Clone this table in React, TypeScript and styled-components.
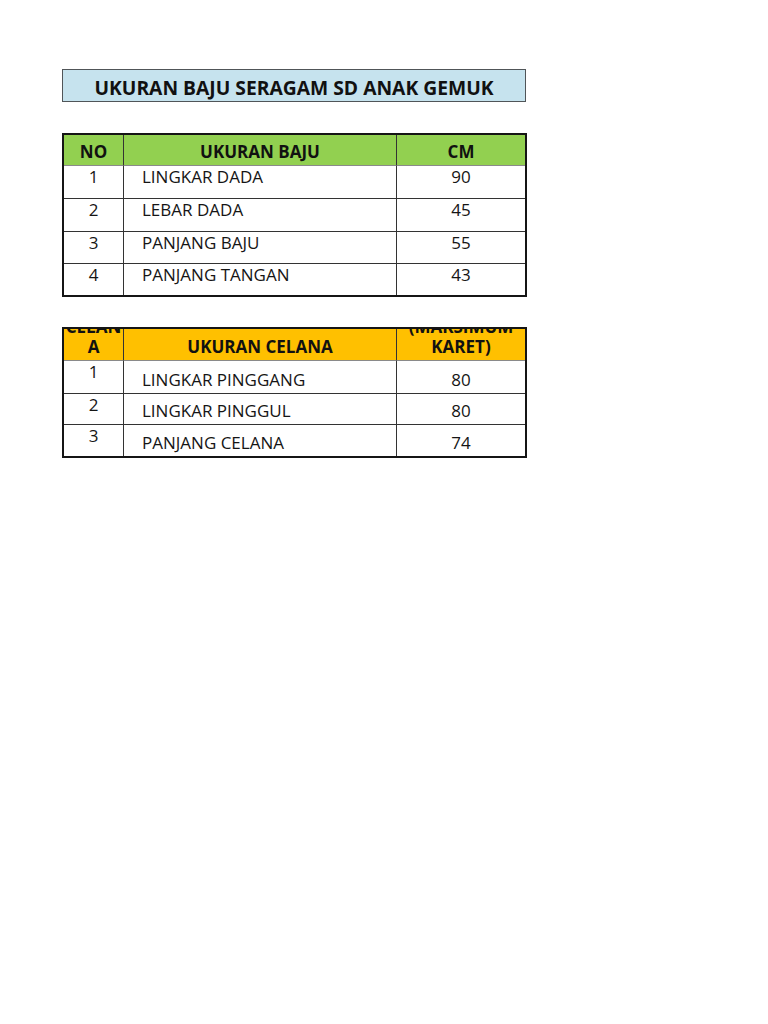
import React from "react";
import styled, { createGlobalStyle } from "styled-components";

const Global = createGlobalStyle`
  html, body { margin: 0; padding: 0; background: #ffffff; }
  body { font-family: "Open Sans", "Noto Sans", sans-serif; color: #111; }
`;

const Page = styled.div`
  width: 768px;
  height: 1024px;
  box-sizing: border-box;
  padding: 69px 0 0 62px;
  display: flex;
  flex-direction: column;
`;

const Title = styled.div`
  width: 464px;
  height: 33px;
  box-sizing: border-box;
  background: #c6e3ee;
  border: 1.5px solid #505558;
  display: flex;
  align-items: center;
  justify-content: center;
  padding-top: 3px;
  font-weight: 700;
  font-size: 19.3px;
  color: #111;
`;

const Table = styled.div<{ $mt: number }>`
  margin-top: ${(p) => p.$mt}px;
  width: 465px;
  box-sizing: border-box;
  border: 2px solid #151515;
  display: grid;
  grid-template-columns: 60px 273px 1fr;
`;

const HeadCell = styled.div<{ $bg: string; $h: number; $last?: boolean }>`
  height: ${(p) => p.$h}px;
  background: ${(p) => p.$bg};
  box-sizing: border-box;
  border-right: ${(p) => (p.$last ? "none" : "1px solid #333")};
  border-bottom: 1px solid #8a8a8a;
  overflow: hidden;
  display: flex;
  flex-direction: column;
  justify-content: flex-end;
  align-items: center;
  text-align: center;
  padding: 0 1px 3px;
  font-weight: 700;
  font-size: 17px;
  line-height: 20px;
  color: #111;
  overflow-wrap: anywhere;
`;

const HeadText = styled.span`
  display: block;
  width: 100%;
`;

type Align = "top" | "bottom";

const Cell = styled.div<{ $h: number; $align: Align; $left?: boolean; $last?: boolean; $lastRow?: boolean }>`
  height: ${(p) => p.$h}px;
  box-sizing: border-box;
  border-right: ${(p) => (p.$last ? "none" : "1px solid #333")};
  border-bottom: ${(p) => (p.$lastRow ? "none" : "1px solid #333")};
  display: flex;
  flex-direction: column;
  justify-content: ${(p) => (p.$align === "top" ? "flex-start" : "flex-end")};
  align-items: ${(p) => (p.$left ? "flex-start" : "center")};
  padding: ${(p) => (p.$align === "top" ? "1px 0 0" : "0 0 3px")};
  padding-left: ${(p) => (p.$left ? "18px" : "0")};
  font-size: 17px;
  line-height: 20px;
  color: #151515;
  white-space: nowrap;
`;

const bajuRows = [
  { no: "1", name: "LINGKAR DADA", cm: "90", h: 33 },
  { no: "2", name: "LEBAR DADA", cm: "45", h: 33 },
  { no: "3", name: "PANJANG BAJU", cm: "55", h: 32 },
  { no: "4", name: "PANJANG TANGAN", cm: "43", h: 31 },
];

const celanaRows = [
  { no: "1", name: "LINGKAR PINGGANG", cm: "80", h: 33 },
  { no: "2", name: "LINGKAR PINGGUL", cm: "80", h: 31 },
  { no: "3", name: "PANJANG CELANA", cm: "74", h: 31 },
];

export default function App() {
  return (
    <>
      <Global />
      <Page>
        <Title>UKURAN BAJU SERAGAM SD ANAK GEMUK</Title>

        <Table $mt={31}>
          <HeadCell $bg="#92d050" $h={31}><HeadText>NO</HeadText></HeadCell>
          <HeadCell $bg="#92d050" $h={31}><HeadText>UKURAN BAJU</HeadText></HeadCell>
          <HeadCell $bg="#92d050" $h={31} $last><HeadText>CM</HeadText></HeadCell>
          {bajuRows.map((r, i) => {
            const lastRow = i === bajuRows.length - 1;
            return (
              <React.Fragment key={r.no}>
                <Cell $h={r.h} $align="top" $lastRow={lastRow}>{r.no}</Cell>
                <Cell $h={r.h} $align="top" $left $lastRow={lastRow}>{r.name}</Cell>
                <Cell $h={r.h} $align="top" $last $lastRow={lastRow}>{r.cm}</Cell>
              </React.Fragment>
            );
          })}
        </Table>

        <Table $mt={30}>
          <HeadCell $bg="#ffc000" $h={32}><HeadText>CELANA</HeadText></HeadCell>
          <HeadCell $bg="#ffc000" $h={32}><HeadText>UKURAN CELANA</HeadText></HeadCell>
          <HeadCell $bg="#ffc000" $h={32} $last><HeadText>CM (MAKSIMUM KARET)</HeadText></HeadCell>
          {celanaRows.map((r, i) => {
            const lastRow = i === celanaRows.length - 1;
            return (
              <React.Fragment key={r.no}>
                <Cell $h={r.h} $align="top" $lastRow={lastRow}>{r.no}</Cell>
                <Cell $h={r.h} $align="bottom" $left $lastRow={lastRow}>{r.name}</Cell>
                <Cell $h={r.h} $align="bottom" $last $lastRow={lastRow}>{r.cm}</Cell>
              </React.Fragment>
            );
          })}
        </Table>
      </Page>
    </>
  );
}
